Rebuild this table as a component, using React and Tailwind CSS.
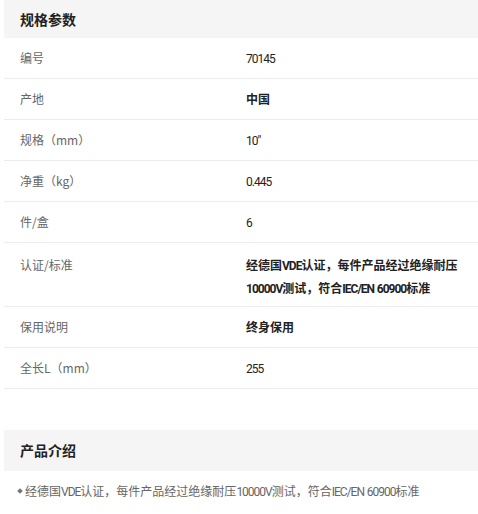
import React from 'react';

const specs = [
  { label: '编号', value: '70145' },
  { label: '产地', value: '中国', bold: true },
  { label: '规格（mm）', value: '10"' },
  { label: '净重（kg）', value: '0.445' },
  { label: '件/盒', value: '6' },
  { label: '认证/标准', value: '经德国VDE认证，每件产品经过绝缘耐压10000V测试，符合IEC/EN 60900标准', bold: true, multi: true },
  { label: '保用说明', value: '终身保用', bold: true },
  { label: '全长L（mm）', value: '255' },
];

// latin runs in the values are set in a tight, narrow looking face
const Narrow = ({ text }) =>
  text.split(/([A-Za-z0-9.\/"]+)/).map((part, i) =>
    /^[A-Za-z0-9.\/"]+$/.test(part) ? (
      <span key={i} className="tracking-[-1px] leading-none font-['Roboto']">
        {part}
      </span>
    ) : (
      <React.Fragment key={i}>{part}</React.Fragment>
    )
  );

const SpecRow = ({ label, value, bold, multi }) => {
  if (multi) {
    return (
      <div className="flex border-b border-[#ececec] pt-[10px] pb-[7px]">
        <div className="w-[242px] shrink-0 pl-4 text-[12px] leading-[23px] text-[#666]">{label}</div>
        <div className={`flex-1 pr-[10px] text-[12px] leading-[23px] text-[#222] ${bold ? 'font-bold' : ''}`}>
          <Narrow text={value} />
        </div>
      </div>
    );
  }

  return (
    <div className="flex h-[41px] items-center border-b border-[#ececec]">
      <div className="w-[242px] shrink-0 pl-4 text-[12px] text-[#666]">{label}</div>
      <div className={`flex-1 text-[12px] text-[#222] ${bold ? 'font-bold' : ''}`}>
        <Narrow text={value} />
      </div>
    </div>
  );
};

export default function App() {
  return (
    <div
      className="w-[478px] h-[514px] bg-white pl-[4px] overflow-hidden"
      style={{ fontFamily: '"Noto Sans CJK SC", "Noto Sans", sans-serif' }}
    >
      <div className="h-[38px] bg-[#f5f5f5] flex items-center pl-4 text-[14px] font-bold text-[#222]">
        规格参数
      </div>

      {specs.map((s) => (
        <SpecRow key={s.label} {...s} />
      ))}

      <div className="h-[41px]" />

      <div className="h-[41px] bg-[#f5f5f5] flex items-center pl-4 text-[14px] font-bold text-[#222]">
        产品介绍
      </div>

      <div className="flex items-center pl-[14px] pt-[11px] text-[12px] text-[#666]">
        <span className="inline-block w-[4px] h-[4px] bg-[#777] rotate-45 mr-[3px]" />
        <span>
          <Narrow text="经德国VDE认证，每件产品经过绝缘耐压10000V测试，符合IEC/EN 60900标准" />
        </span>
      </div>
    </div>
  );
}
